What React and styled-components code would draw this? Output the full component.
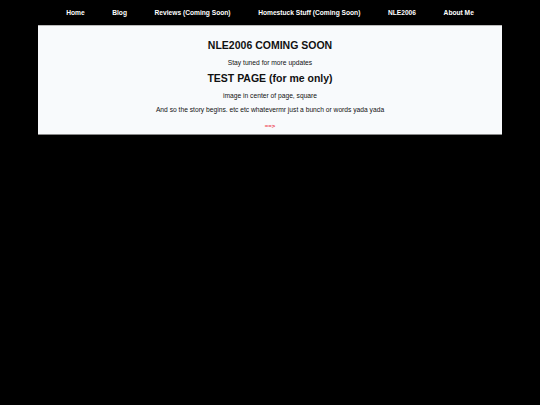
import React from 'react';
import styled, { createGlobalStyle } from 'styled-components';

const GlobalStyle = createGlobalStyle`
  html, body {
    margin: 0;
    padding: 0;
    background: #000;
    font-family: 'Liberation Sans', Arial, sans-serif;
    -webkit-font-smoothing: antialiased;
  }
`;

const Page = styled.div`
  min-height: 405px;
  background: #000;
`;

const NavBar = styled.nav`
  display: flex;
  justify-content: center;
  align-items: center;
  height: 25px;
`;

const NavLink = styled.a`
  color: #fff;
  font-size: 6.65px;
  font-weight: bold;
  text-decoration: none;
  padding: 0 13.8px;
`;

const Panel = styled.main`
  margin: 0 38px;
  background: #f8fafc;
  border-top: 1px solid #bbb;
  border-bottom: 1px solid #888;
  padding: 13px 10px 2px;
  text-align: center;
  color: #111;
`;

const Heading = styled.h1`
  margin: 0;
  font-size: 10.5px;
  font-weight: bold;
  line-height: 13px;
`;

const Text = styled.p`
  margin: ${(p) => p.$m || '0'};
  font-size: 6.7px;
  line-height: 8px;
`;

const Arrow = styled.a`
  display: inline-block;
  margin-top: 3px;
  color: #ee3344;
  font-size: 6px;
  font-weight: bold;
  line-height: 8px;
  text-decoration: none;
`;

const links = ['Home', 'Blog', 'Reviews (Coming Soon)', 'Homestuck Stuff (Coming Soon)', 'NLE2006', 'About Me'];

export default function App() {
  return (
    <Page>
      <GlobalStyle />
      <NavBar>
        {links.map((l) => (
          <NavLink key={l} href="#">{l}</NavLink>
        ))}
      </NavBar>
      <Panel>
        <Heading>NLE2006 COMING SOON</Heading>
        <Text $m="7px 0 5px">Stay tuned for more updates</Text>
        <Heading>TEST PAGE (for me only)</Heading>
        <Text $m="7px 0 6px">image in center of page, square</Text>
        <Text>And so the story begins. etc etc whatevermr just a bunch or words yada yada</Text>
        <Arrow href="#">==&gt;</Arrow>
      </Panel>
    </Page>
  );
}
